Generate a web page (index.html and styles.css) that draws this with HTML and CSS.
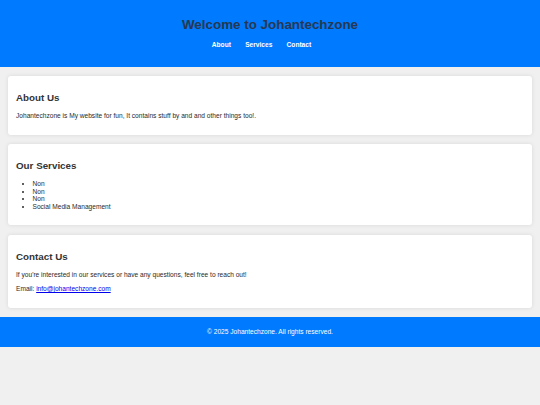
FILE: index.html
```html
<!DOCTYPE html>
<html lang="en">
<head>
    <meta charset="UTF-8">
    <meta name="viewport" content="width=device-width, initial-scale=1.0">
    <title>Johantechzone</title>
    <link rel="stylesheet" href="styles.css">
</head>
<body>
    <header>
        <h1>Welcome to Johantechzone</h1>
        <nav>
            <ul>
                <li><a href="#about">About</a></li>
                <li><a href="#services">Services</a></li>
                <li><a href="#contact">Contact</a></li>
            </ul>
        </nav>
    </header>

    <section id="about" class="card">
        <h2>About Us</h2>
        <p>Johantechzone is My website for fun, It contains stuff by and and other things too!.</p>
    </section>

    <section id="services" class="card">
        <h2>Our Services</h2>
        <ul>
            <li>Non</li>
            <li>Non</li>
            <li>Non</li>
            <li>Social Media Management</li>
        </ul>
    </section>

    <section id="contact" class="card">
        <h2>Contact Us</h2>
        <p>If you're interested in our services or have any questions, feel free to reach out!</p>
        <p>Email: <a href="mailto:info@johantechzone.com">info@johantechzone.com</a></p>
    </section>

    <footer>
        <p>&copy; 2025 Johantechzone. All rights reserved.</p>
    </footer>
</body>
</html>
```

FILE: styles.css
```css
body {
    font-family: "Liberation Sans", Arial, sans-serif;
    font-size: 6.6px;
    line-height: 7.5px;
    margin: 0;
    background-color: #f0f0f0;
    color: #2a2a2a;
}
header {
    background-color: #007bff;
    text-align: center;
    padding: 17px 0 18px;
}
header h1 {
    font-size: 13.4px;
    line-height: 15.4px;
    margin: 0 0 9px;
    color: #263850;
}
nav ul {
    list-style: none;
    margin: 0;
    padding: 0 17px 0 0;
    display: flex;
    justify-content: center;
    gap: 14.3px;
}
nav a {
    color: #fff;
    font-weight: bold;
    text-decoration: none;
}
.card {
    background-color: #fff;
    margin: 9.5px 8px;
    padding: 8px;
    border-radius: 3px;
    box-shadow: 0 0 4px rgba(0, 0, 0, 0.1);
}
.card h2 {
    font-size: 9.8px;
    line-height: 11.5px;
    margin: 8px 0 8.5px;
    color: #333;
}
.card p {
    margin: 7px 0;
}
.card ul {
    margin: 7px 0;
    padding-left: 16.5px;
}
.card a {
    color: #0000ee;
}
footer {
    background-color: #007bff;
    color: #fff;
    text-align: center;
    padding: 11px 0;
}
footer p {
    margin: 0;
}
```
